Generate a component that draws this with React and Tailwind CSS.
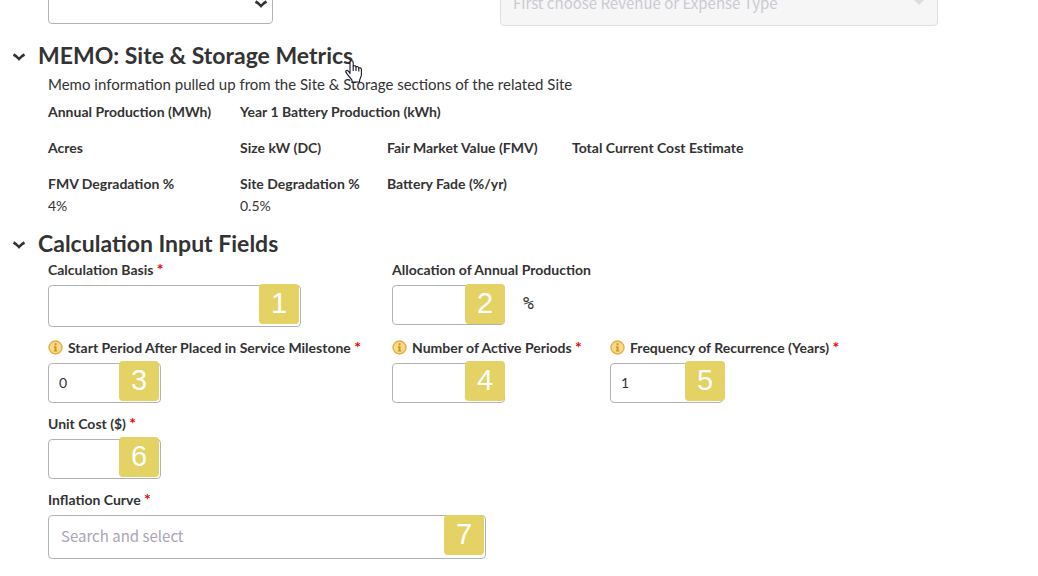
import React, { useState } from "react";

const metricRows = [
  [
    { label: "Annual Production (MWh)" },
    { label: "Year 1 Battery Production (kWh)", wide: true },
  ],
  [
    { label: "Acres" },
    { label: "Size kW (DC)" },
    { label: "Fair Market Value (FMV)" },
    { label: "Total Current Cost Estimate" },
  ],
  [
    { label: "FMV Degradation %", value: "4%" },
    { label: "Site Degradation %", value: "0.5%" },
    { label: "Battery Fade (%/yr)" },
  ],
];

const Chevron = ({ className }) => (
  <svg viewBox="0 0 14 9" className={className} fill="none" aria-hidden="true">
    <path d="M1.5 1.5 Q4.5 3.2 7 6 Q9.5 3.2 12.5 1.5" stroke="#333" strokeWidth="2.6" />
  </svg>
);

const InfoIcon = () => (
  <svg viewBox="0 0 15 15" className="h-[15px] w-[15px] shrink-0" aria-hidden="true">
    <circle cx="7.5" cy="7.5" r="6.5" fill="#fbd98c" stroke="#deb048" strokeWidth="1.4" />
    <path d="M6.5 3.2h2v2h-2zM5.8 6.2h2.7v4.2h.8v1.2H5.8v-1.2h.8V7.4h-.8z" fill="#c8960c" />
  </svg>
);

const Cursor = () => (
  <svg
    viewBox="0 0 17 23"
    className="pointer-events-none absolute top-full left-full h-[23px] w-[17px] -translate-x-2 -translate-y-[11px]"
    aria-hidden="true"
  >
    <path
      d="M5 14V2.4C5 .2 8.2.2 8.2 2.4V6.2C9 5.4 10.8 5.6 11 6.9C12 6.2 13.6 6.6 13.8 7.9C15 7.3 16.4 8.2 16.4 9.5V14.5C16.4 17 14.8 18.4 14.6 20.5V22H7V20.2C5.5 18.2 2.4 14.6 1 12.4C.2 11 1.8 9.8 3 10.9L5 13"
      fill="#fff"
      stroke="#151528"
      strokeWidth="1.1"
      strokeLinejoin="round"
    />
    <path d="M8.2 6v5M11 7v4M13.8 8v3.4" stroke="#151528" strokeWidth="1.1" />
  </svg>
);

const SectionHeader = ({ title, open, onToggle, children }) => (
  <h2 className="text-[23px] leading-[31px] font-bold">
    <button
      type="button"
      onClick={onToggle}
      aria-expanded={open}
      className="relative flex items-center gap-3 pl-3"
    >
      <Chevron className="mt-1 h-[9px] w-[14px]" />
      {title}
      {children}
    </button>
  </h2>
);

const Field = ({ id, label, required, info, badge, badgeClass, inputClass, suffix, ...rest }) => (
  <div className="flex flex-col gap-[5px]">
    <label htmlFor={id} className="flex items-center gap-[5px] leading-[21px] font-bold">
      {info && <InfoIcon />}
      <span>
        {label} {required && <span className="text-base leading-none text-[#f00000]">*</span>}
      </span>
    </label>
    <div className="flex items-center gap-[18px]">
      <div className={`relative ${inputClass}`}>
        <input
          id={id}
          type="text"
          required={required}
          className="h-full w-full rounded border border-[#b3b3b3] bg-white px-[10px] pb-[2px] placeholder:font-['Noto_Sans_CJK_SC',sans-serif] placeholder:text-[15px] placeholder:text-[#aaa5b5]"
          {...rest}
        />
        <span
          className={`absolute flex h-10 w-10 items-center justify-center rounded-sm bg-[#e4d264] font-['Liberation_Sans',sans-serif] text-[29px] text-white ${badgeClass}`}
        >
          {badge}
        </span>
      </div>
      {suffix && (
        <span className="pb-1 font-['DejaVu_Sans_Mono',monospace] text-lg leading-6">{suffix}</span>
      )}
    </div>
  </div>
);

const App = () => {
  const [memoOpen, setMemoOpen] = useState(true);
  const [inputsOpen, setInputsOpen] = useState(true);

  return (
    <main className="overflow-hidden bg-white font-[Lato,sans-serif] text-[14px] text-[#333]">
      {/* TYPE SELECTORS */}
      <div className="-mt-[18px] flex items-start gap-[227px] pl-12">
        <div className="relative">
          <select
            aria-label="Revenue or Expense Type"
            className="h-[42px] w-[225px] appearance-none rounded border border-[#b3b3b3] bg-white px-3"
          >
            <option value=""></option>
          </select>
          <Chevron className="pointer-events-none absolute top-[18px] right-[5px] h-[9px] w-[14px]" />
        </div>
        <div className="relative">
          <select
            aria-label="Category"
            disabled
            className="h-11 w-[438px] appearance-none rounded border border-[#dfdfdf] bg-[#f6f6f6] px-3 pb-[2px] font-['Noto_Sans_CJK_SC',sans-serif] text-[15px] text-[#cbcad2] opacity-100"
          >
            <option>First choose Revenue or Expense Type</option>
          </select>
          <svg
            viewBox="0 0 12 6"
            className="pointer-events-none absolute top-[17px] right-[13px] h-[6px] w-3"
            aria-hidden="true"
          >
            <path d="M0 0h12L6 6z" fill="#dddddd" />
          </svg>
        </div>
      </div>

      {/* MEMO */}
      <section className="mt-[14px]">
        <SectionHeader
          title="MEMO: Site & Storage Metrics"
          open={memoOpen}
          onToggle={() => setMemoOpen(!memoOpen)}
        >
          <Cursor />
        </SectionHeader>
        {memoOpen && (
          <div className="pl-12">
            <p className="mt-[3px] text-[15px] leading-5">
              Memo information pulled up from the Site &amp; Storage sections of the related Site
            </p>
            <div className="mt-2 flex flex-col gap-4">
              {metricRows.map((row) => (
                <dl key={row[0].label} className="grid grid-cols-[192px_147px_185px_1fr]">
                  {row.map(({ label, value, wide }) => (
                    <div key={label} className={wide ? "col-span-2" : ""}>
                      <dt className="leading-5 font-bold">{label}</dt>
                      {value && <dd className="pt-[2px] leading-5">{value}</dd>}
                    </div>
                  ))}
                </dl>
              ))}
            </div>
          </div>
        )}
      </section>

      {/* CALCULATION INPUTS */}
      <section className="mt-3">
        <SectionHeader
          title="Calculation Input Fields"
          open={inputsOpen}
          onToggle={() => setInputsOpen(!inputsOpen)}
        />
        {inputsOpen && (
          <form className="flex flex-col gap-[10px] pb-4 pl-12">
            <div className="grid grid-cols-[344px_1fr]">
              <Field
                id="basis"
                label="Calculation Basis"
                required
                badge="1"
                badgeClass="-top-px right-[2px]"
                inputClass="h-[42px] w-[253px]"
              />
              <Field
                id="allocation"
                label="Allocation of Annual Production"
                badge="2"
                badgeClass="-top-px right-0"
                inputClass="h-10 w-[113px]"
                suffix="%"
              />
            </div>
            <div className="grid grid-cols-[344px_218px_1fr]">
              <Field
                id="start"
                label="Start Period After Placed in Service Milestone"
                required
                info
                badge="3"
                badgeClass="-top-[2px] right-[2px]"
                inputClass="h-10 w-[113px]"
                defaultValue="0"
              />
              <Field
                id="periods"
                label="Number of Active Periods"
                required
                info
                badge="4"
                badgeClass="-top-[2px] right-0"
                inputClass="h-10 w-[113px]"
              />
              <Field
                id="frequency"
                label="Frequency of Recurrence (Years)"
                required
                info
                badge="5"
                badgeClass="-top-[2px] -right-[2px]"
                inputClass="h-10 w-[113px]"
                defaultValue="1"
              />
            </div>
            <Field
              id="cost"
              label="Unit Cost ($)"
              required
              badge="6"
              badgeClass="-top-[2px] right-[2px]"
              inputClass="h-10 w-[113px]"
            />
            <Field
              id="curve"
              label="Inflation Curve"
              required
              badge="7"
              badgeClass="top-0 right-[2px]"
              inputClass="h-11 w-[438px] [&>input]:px-3"
              placeholder="Search and select"
            />
          </form>
        )}
      </section>
    </main>
  );
};

export default App;
